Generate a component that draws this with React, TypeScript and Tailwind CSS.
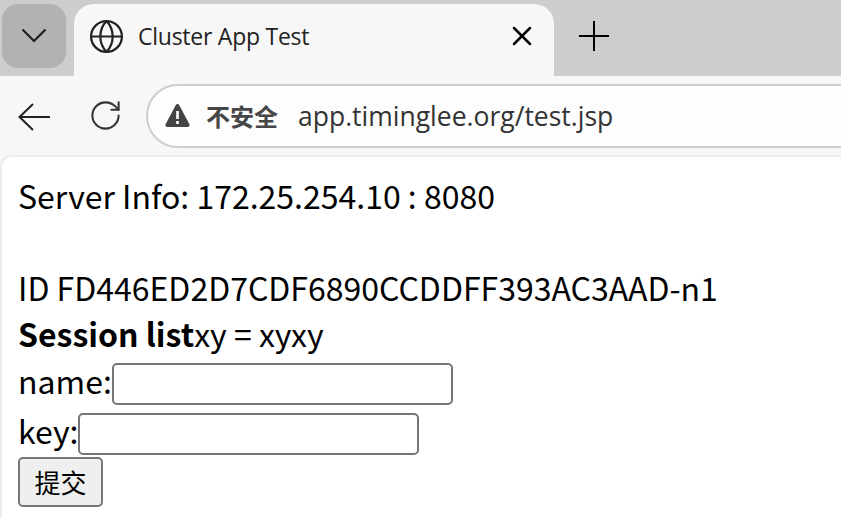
import { Globe, RotateCw, X } from 'lucide-react';

const cjk = "font-['Noto_Sans_CJK_SC',sans-serif]";

export default function App() {
  return (
    <div className="w-[841px] h-[517px] overflow-hidden bg-[#f7f7f7] flex flex-col">
      {/* tab strip */}
      <div className="h-[76px] shrink-0 bg-[#cdcdcd] flex items-start pt-1 pl-0.5">
        <div className="w-16 h-16 rounded-2xl bg-[#b2b2b2] flex items-center justify-center">
          <svg width="28" height="18" viewBox="0 0 28 18" fill="none" stroke="#1f1f1f" strokeWidth="2.2">
            <path d="M2.5 2.5 14 14 25.5 2.5" />
          </svg>
        </div>
        <div className="ml-2 w-[480px] h-[72px] rounded-t-[20px] bg-[#f7f7f7] flex items-center pl-[14px] pr-4 pb-2">
          <Globe size={37} strokeWidth={1.45} className="text-[#222]" />
          <span className="ml-[13px] text-[23px] tracking-[-0.25px] text-[#222] font-['Open_Sans',sans-serif] leading-none flex-1">Cluster App Test</span>
          <X size={32} strokeWidth={1.9} className="text-black" />
        </div>
        <div className="ml-[25px] h-16 flex items-center">
          <svg width="30" height="30" viewBox="0 0 30 30" stroke="#000" strokeWidth="2">
            <path d="M0 15H30M15 0V30" />
          </svg>
        </div>
      </div>

      {/* toolbar */}
      <div className="h-[79px] shrink-0 flex items-center pl-[18px]">
        <svg width="32" height="28" viewBox="0 0 32 28" fill="none" stroke="#222" strokeWidth="2" className="mt-[2px]">
          <path d="M32 14H1.5M15 1 1.5 14 15 27" />
        </svg>
        <RotateCw size={35} strokeWidth={1.4} className="ml-[38px] text-[#333]" />
        <div className="ml-[23px] flex-1 h-[64px] mr-[-60px] rounded-l-full border-2 border-[#cdcdcd] bg-[#fdfdfd] flex items-center pl-[17px]">
          <svg width="25" height="23" viewBox="0 0 25 23">
            <path d="M10.7 1.2a2 2 0 0 1 3.6 0l10 18.8a2 2 0 0 1-1.8 3h-20a2 2 0 0 1-1.8-3z" fill="#444" />
            <path d="M11.2 7h2.6v8h-2.6zM11.2 17h2.6v3h-2.6z" fill="#fdfdfd" />
          </svg>
          <span className={`ml-4 text-[24px] font-bold text-[#474747] ${cjk}`}>不安全</span>
          <span className="ml-5 mt-0.5 text-[26.5px] text-[#333] font-['Open_Sans',sans-serif]">app.timinglee.org/test.jsp</span>
        </div>
      </div>

      {/* page */}
      <div className={`flex-1 bg-white rounded-tl-xl border-l-2 border-t-2 border-[#ececec] pl-4 pt-[15px] text-[32px] leading-[46px] text-black ${cjk}`}>
        <div>Server Info: 172.25.254.10 : 8080</div>
        <div className="h-[46px]" />
        <div>ID FD446ED2D7CDF6890CCDDFF393AC3AAD-n1</div>
        <div><b>Session list</b>xy = xyxy</div>
        <div className="h-[50px] flex items-start leading-[48px]">
          name:<input className="mt-[7px] w-[341px] h-[42px] bg-white border-2 border-[#767676] rounded-[5px]" />
        </div>
        <div className="h-[50px] flex items-start leading-[48px]">
          key:<input className="mt-[7px] w-[341px] h-[42px] bg-white border-2 border-[#767676] rounded-[5px]" />
        </div>
        <button className="mt-px w-[85px] h-[50px] block bg-[#efefef] border-2 border-[#767676] rounded-[5px] text-[26px] leading-none text-black">提交</button>
      </div>
    </div>
  );
}
